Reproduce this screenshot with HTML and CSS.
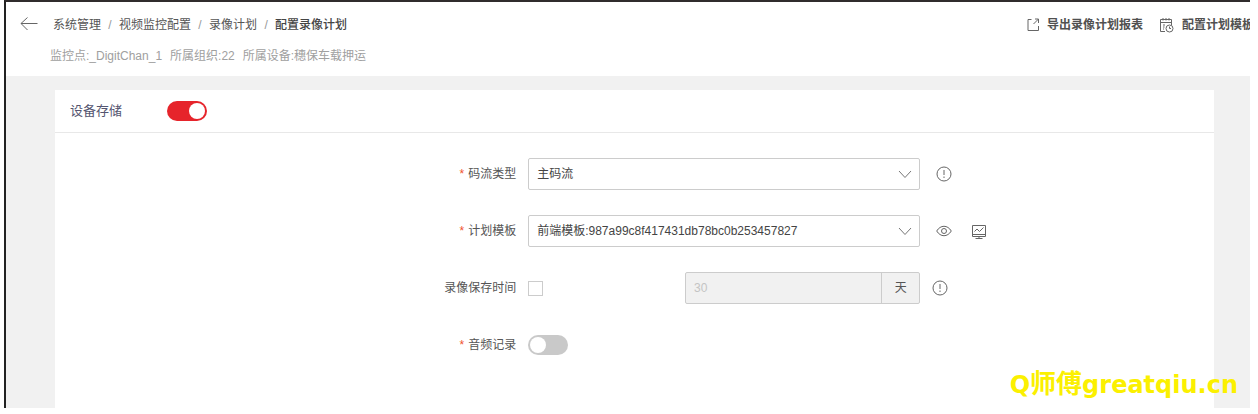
FILE: index.html
```html
<!DOCTYPE html>
<html lang="zh-CN">
<head>
<meta charset="utf-8">
<title>配置录像计划</title>
<link rel="stylesheet" href="styles.css">
</head>
<body>
<div class="app">
  <header class="page-header">
    <div class="title-row">
      <button class="icon-button back" type="button" aria-label="返回">
        <svg width="18" height="14" viewBox="0 0 18 14"><path d="M17.500 5.500H1M7.500 -0.500L1 5.500l6.500 6.500"/></svg>
      </button>
      <nav class="breadcrumb">
        <a href="#">系统管理</a><span class="sep">/</span>
        <a href="#">视频监控配置</a><span class="sep">/</span>
        <a href="#">录像计划</a><span class="sep">/</span>
        <span class="current">配置录像计划</span>
      </nav>
      <div class="actions">
        <button class="action" type="button">
          <svg width="13" height="14" viewBox="0 0 13 14"><path d="M5.500 1.500H2v11h10.500V8M9 1h3.500v4M12.500 1L7.500 6"/></svg>
          导出录像计划报表
        </button>
        <button class="action" type="button">
          <svg width="15" height="15" viewBox="0 0 15 15"><path d="M6 13.500H1.500v-12h11V7M1.500 4.500h11M4 0v2.500M7 0v2.500M10 0v2.500M4 7h2M4 9h1.500M4 11h1"/><circle cx="10.500" cy="10.500" r="3.500"/><path d="M10.500 8.500v2H12"/></svg>
          配置计划模板
        </button>
      </div>
    </div>
    <div class="meta">
      <span>监控点:_DigitChan_1</span>
      <span>所属组织:22</span>
      <span>所属设备:穗保车载押运</span>
    </div>
  </header>
  <main class="content">
    <section class="card">
      <div class="card-header">
        <label for="storage">设备存储</label>
        <input class="switch" id="storage" type="checkbox" role="switch" checked>
      </div>
      <form class="form">
        <div class="row">
          <label class="label required" for="stream">码流类型</label>
          <div class="select-box">
            <select id="stream"><option>主码流</option></select>
            <svg class="chevron" width="14" height="9" viewBox="0 0 14 9"><path d="M1 1l6 6.500L13 1"/></svg>
          </div>
          <div class="tools">
            <button class="icon-button" type="button" aria-label="说明"><svg width="16" height="16" viewBox="0 0 16 16"><circle cx="8" cy="8" r="7"/><path d="M8 4v5M8 10.500v1.500"/></svg></button>
          </div>
        </div>
        <div class="row">
          <label class="label required" for="template">计划模板</label>
          <div class="select-box">
            <select id="template"><option>前端模板:987a99c8f417431db78bc0b253457827</option></select>
            <svg class="chevron" width="14" height="9" viewBox="0 0 14 9"><path d="M1 1l6 6.500L13 1"/></svg>
          </div>
          <div class="tools">
            <button class="icon-button" type="button" aria-label="查看"><svg width="16" height="16" viewBox="0 0 16 16"><path d="M.7 8C4.500 1.700 11.500 1.700 15.300 8 11.500 14.300 4.500 14.300.7 8z"/><circle cx="8" cy="8" r="2.500"/></svg></button>
            <button class="icon-button" type="button" aria-label="监控"><svg width="16" height="16" viewBox="0 0 16 16"><path d="M1.500 2.500h13v11h-13zM1.500 11.500h13M8 13.500v2M4.500 15.500h7"/><path d="M3.500 8.500L6 6l2.500 2.500L12.500 4.500"/></svg></button>
          </div>
        </div>
        <div class="row">
          <label class="label" for="keep">录像保存时间</label>
          <div class="keep">
            <input class="check" id="keep" type="checkbox">
            <div class="days">
              <input type="text" value="30" aria-label="保存天数" disabled>
              <span class="unit">天</span>
            </div>
          </div>
          <div class="tools near">
            <button class="icon-button" type="button" aria-label="说明"><svg width="16" height="16" viewBox="0 0 16 16"><circle cx="8" cy="8" r="7"/><path d="M8 4v5M8 10.500v1.500"/></svg></button>
          </div>
        </div>
        <div class="row">
          <label class="label required" for="audio">音频记录</label>
          <input class="switch" id="audio" type="checkbox" role="switch">
        </div>
      </form>
    </section>
  </main>
  <div class="watermark">Q<span class="han">师傅</span>greatqiu.cn</div>
</div>
</body>
</html>
```
FILE: styles.css
```css
* { box-sizing: border-box; }
body {
  margin: 0;
  padding: 0 8px 6px 4px;
  height: 100vh;
  background: #fff;
  color: #555;
  font: 12px/16px "Liberation Sans", "Noto Sans CJK SC", sans-serif;
}
button, input, select { font: inherit; color: inherit; }
button { padding: 0; border: 0; background: none; }
svg { display: block; flex: none; overflow: visible; fill: none; stroke: #666; }
.app {
  position: relative;
  display: flex;
  flex-direction: column;
  height: 100%;
  overflow: hidden;
  border-top: 2px solid #302c2d;
  border-left: 2px solid #222;
  background: #f1f1f1;
}
.page-header { padding: 15px 0 12px 14px; background: #fff; white-space: nowrap; }
.title-row { display: flex; align-items: center; height: 16px; }
.back { margin-right: 15px; }
.breadcrumb { display: flex; flex: 1; }
.breadcrumb a { color: inherit; text-decoration: none; }
.sep { width: 18px; text-align: center; color: #999; }
.current { font-weight: 500; color: #444; }
.actions { display: flex; gap: 16px; margin-right: -4px; }
.action { display: flex; align-items: center; gap: 8px; font-weight: 700; color: #505050; }
.meta { display: flex; gap: 8px; margin-top: 15px; padding-left: 30px; color: #a0a0a0; }
.content { display: flex; flex: 1; padding: 14px 36px 0 49px; }
.card { flex: 1; background: #fff; }
.card-header {
  display: flex;
  align-items: center;
  gap: 45px;
  height: 43px;
  padding-left: 15px;
  border-bottom: 1px solid #e8e8e8;
  font-size: 13px;
  color: #555570;
}
.form { display: flex; flex-direction: column; gap: 25px; padding: 25px 6px 0 0; }
.row {
  display: grid;
  grid-template-columns: 40% 34% 1fr;
  column-gap: 12px;
  align-items: center;
  min-height: 32px;
}
.label { text-align: right; }
.required::before { content: "*"; margin-right: 4px; color: #f0532d; }
.select-box { position: relative; }
.select-box select {
  display: block;
  width: 100%;
  height: 32px;
  padding: 0 32px 0 8px;
  appearance: none;
  border: 1px solid #ccc;
  border-radius: 2px;
  background: #fff;
  color: #444;
}
.chevron { position: absolute; top: 12px; right: 8px; pointer-events: none; stroke: #777; }
.tools { display: flex; gap: 19px; padding-left: 4px; }
.near { padding-left: 0; }
.keep { display: flex; align-items: center; justify-content: space-between; }
.check {
  width: 15px;
  height: 15px;
  margin: 0;
  appearance: none;
  border: 1px solid #ccc;
  background: #fff;
}
.days {
  display: flex;
  width: 60%;
  height: 32px;
  border: 1px solid #ccc;
  border-radius: 2px;
  background: #f1f1f1;
}
.days input { flex: 1; min-width: 0; padding: 0 8px; border: 0; background: none; color: #c4c4c4; }
.unit { width: 38px; border-left: 1px solid #ccc; line-height: 30px; text-align: center; }
.switch {
  width: 40px;
  height: 20px;
  margin: 0;
  padding: 2px;
  appearance: none;
  border-radius: 10px;
  background: #c9c9c9;
}
.switch::before { content: ""; display: block; width: 16px; height: 16px; border-radius: 50%; background: #fff; }
.switch:checked { background: #e6242b; }
.switch:checked::before { margin-left: auto; }
.watermark {
  position: absolute;
  right: 12px;
  bottom: 8px;
  color: #fbf000;
  font: 700 24px/30px "DejaVu Sans", "Noto Sans CJK SC", sans-serif;
}
.han { font-size: 26px; }
```
